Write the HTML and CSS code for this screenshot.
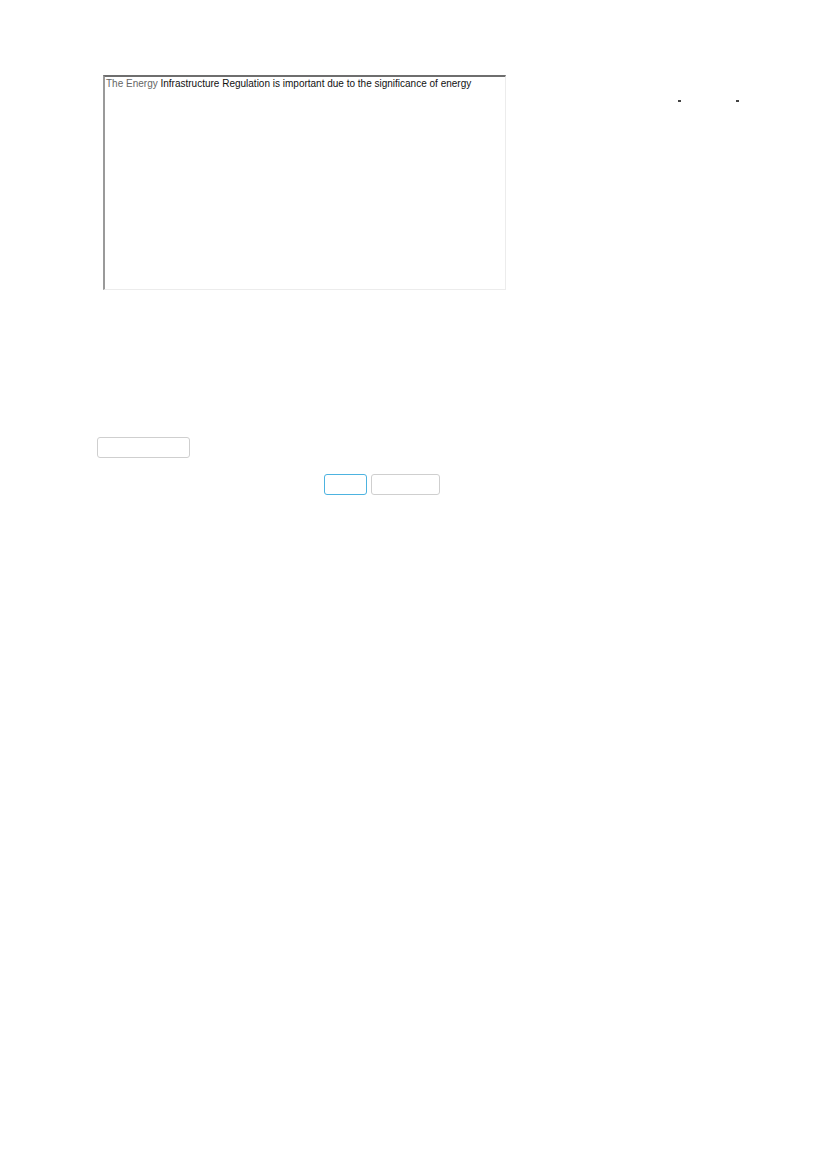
FILE: index.html
```html
<!DOCTYPE html>
<html lang="en">
<head>
<meta charset="utf-8">
<title>Energy Infrastructure Regulation</title>
<link rel="stylesheet" href="styles.css">
</head>
<body>
<div class="page">
  <div class="top-row">
    <div class="editor"><span class="soft">The Energy</span> Infrastructure Regulation is important due to the significance of energy</div>
    <div class="marks"><span class="mark"></span><span class="mark"></span></div>
  </div>
  <button class="btn btn-wide" type="button"></button>
  <div class="actions">
    <button class="btn btn-primary" type="button"></button>
    <button class="btn btn-secondary" type="button"></button>
  </div>
</div>
</body>
</html>
```
FILE: styles.css
```css
html, body {
  margin: 0;
  padding: 0;
  background: #fff;
}

.page {
  padding-top: 75px;
  font-family: "Liberation Sans", Arial, sans-serif;
}

.top-row {
  display: flex;
  align-items: flex-start;
}

/* inset-style text area */
.editor {
  margin-left: 103px;
  width: 403px;
  height: 215px;
  box-sizing: border-box;
  border-top: 2px solid #6e6e6e;
  border-left: 2px solid #9a9a9a;
  border-right: 1px solid #ececec;
  border-bottom: 1px solid #ececec;
  padding: 1px 1px 0 1px;
  font-size: 10px;
  line-height: 12px;
  color: #111;
  white-space: nowrap;
}

.soft {
  color: #666;
}

.marks {
  display: flex;
  gap: 55px;
  margin-left: 172px;
  margin-top: 25px;
}

.mark {
  display: block;
  width: 3px;
  height: 2px;
  background: #444;
}

.btn {
  display: block;
  padding: 0;
  margin: 0;
  background: #fff;
  border: 1px solid #cfcfcf;
  border-radius: 3px;
  height: 21px;
  box-sizing: border-box;
}

.btn-wide {
  margin-left: 97px;
  margin-top: 147px;
  width: 93px;
}

.actions {
  display: flex;
  gap: 4px;
  margin-left: 324px;
  margin-top: 16px;
}

.btn-primary {
  width: 43px;
  border-color: #4db3e0;
}

.btn-secondary {
  width: 69px;
}
```
